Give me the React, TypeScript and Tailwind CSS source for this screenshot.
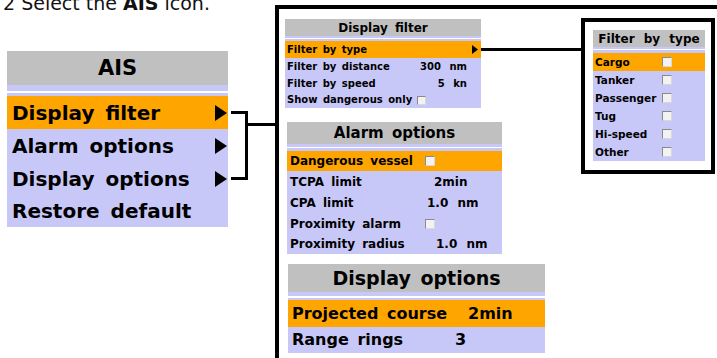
import { FC, ReactNode } from "react";

const ORANGE = "bg-[#ffa500]";
const LAV = "bg-[#c8c8f8]";

const Tri: FC<{ w: number; h: number }> = ({ w, h }) => (
  <svg width={w} height={h} viewBox={`0 0 ${w} ${h}`} className="shrink-0">
    <polygon points={`0,0 ${w},${h / 2} 0,${h}`} fill="#000" />
  </svg>
);

const Box: FC<{ size: number }> = ({ size }) => (
  <span
    className="inline-block shrink-0 border border-[#8a8a8a] border-r-[#d8d8d8] border-b-[#d8d8d8] bg-[#f2f2f2]"
    style={{ width: size, height: size }}
  />
);

// gray header + lavender/white separator strip
const Head: FC<{ title: string; h: string; text: string; strip: [string, string, string] }> = ({
  title,
  h,
  text,
  strip,
}) => (
  <>
    <div className={`flex items-center justify-center bg-[#c0c0c0] ${h} ${text} leading-none [word-spacing:3px]`}>
      {title}
    </div>
    <div className={`${LAV} ${strip[0]}`} />
    <div className={`bg-white ${strip[1]}`} />
    <div className={`${LAV} ${strip[2]}`} />
  </>
);

const Row: FC<{ active?: boolean; h: string; className?: string; children: ReactNode }> = ({
  active,
  h,
  className,
  children,
}) => (
  <div className={`flex items-center leading-none ${h} ${active ? ORANGE : LAV} ${className ?? ""}`}>
    {children}
  </div>
);

const App: FC = () => {
  return (
    <div className="flex items-start w-[717px] h-[358px] overflow-hidden bg-white text-black font-['DejaVu_Sans',sans-serif]">
      {/* left column: instruction + AIS menu */}
      <div className="w-[275px] shrink-0 flex flex-col">
        <p className="-mt-[6px] pl-[3px] text-[19px] leading-[19px] whitespace-nowrap text-[#111]">
          2 Select the <b>AIS</b> icon.
        </p>
        <div className="flex items-start mt-[38px]">
          <div className="ml-[7px] w-[221px] font-bold">
            <Head title="AIS" h="h-[34px]" text="text-[21px]" strip={["h-[6px]", "h-[2px]", "h-[3px]"]} />
            {["Display filter", "Alarm options", "Display options"].map((t, i) => (
              <Row key={t} active={i === 0} h="h-[33px]" className="pl-[5px] pr-[1px] text-[20px] [word-spacing:4px]">
                <span className="flex-1">{t}</span>
                <Tri w={12} h={16} />
              </Row>
            ))}
            <Row h="h-[32px]" className="pl-[5px] text-[20px] [word-spacing:4px]">
              Restore default
            </Row>
          </div>
          <svg width="47" height="180" className="shrink-0">
            <rect x="3" y="60" width="17" height="3" fill="#000" />
            <rect x="17" y="60" width="3" height="69" fill="#000" />
            <rect x="3" y="126" width="17" height="3" fill="#000" />
            <rect x="20" y="72" width="27" height="3" fill="#000" />
          </svg>
        </div>
      </div>

      {/* frame with sub menus */}
      <div className="mt-[5px] h-[353px] flex-1 border-t-[4px] border-l-[4px] border-black pl-[6px] pt-[10px] font-bold">
        <div className="grid grid-cols-[196px_100px_auto] items-start">
          {/* Display filter */}
          <div className="w-[196px]">
            <Head title="Display filter" h="h-[17px]" text="text-[12px]" strip={["h-[2px]", "h-[1px]", "h-[2px]"]} />
            <Row active h="h-[17px]" className="pl-[2px] pr-[3px] text-[10px] [word-spacing:2px]">
              <span className="flex-1">Filter by type</span>
              <Tri w={6} h={9} />
            </Row>
            <Row h="h-[17px]" className="pl-[2px] pr-[14px] text-[10px] [word-spacing:2px]">
              <span className="flex-1">Filter by distance</span>
              <span className="[word-spacing:5px]">300 nm</span>
            </Row>
            <Row h="h-[17px]" className="pl-[2px] pr-[14px] text-[10px] [word-spacing:2px]">
              <span className="flex-1">Filter by speed</span>
              <span className="[word-spacing:5px]">5 kn</span>
            </Row>
            <Row h="h-[16px]" className="pl-[2px] text-[10px] [word-spacing:2px]">
              <span className="mr-[5px]">Show dangerous only</span>
              <Box size={9} />
            </Row>
          </div>

          <div className="mt-[29px] h-[3px] bg-black" />

          {/* Filter by type box */}
          <div className="row-span-2 -mt-[1px] w-[134px] h-[156px] border-[4px] border-black pl-[8px] pt-[8px]">
            <div className="w-[112px]">
              <Head title="Filter by type" h="h-[17px]" text="text-[12px] [word-spacing:5px]" strip={["h-[2px]", "h-[1px]", "h-[3px]"]} />
              {["Cargo", "Tanker", "Passenger", "Tug", "Hi-speed", "Other"].map((t, i) => (
                <Row key={t} active={i === 0} h="h-[18px]" className="pl-[2px] text-[10.5px]">
                  <span className="w-[67px]">{t}</span>
                  <Box size={10} />
                </Row>
              ))}
            </div>
          </div>

          {/* Alarm options */}
          <div className="col-span-2 mt-[14px] ml-[2px] w-[215px]">
            <Head title="Alarm options" h="h-[22px]" text="text-[15px]" strip={["h-[3px]", "h-[1px]", "h-[3px]"]} />
            <Row active h="h-[20px]" className="pl-[3px] text-[12px] [word-spacing:3px]">
              <span className="w-[135px]">Dangerous vessel</span>
              <Box size={10} />
            </Row>
            <Row h="h-[21px]" className="pl-[3px] text-[12px] [word-spacing:3px]">
              <span className="w-[144px]">TCPA limit</span>
              <span>2min</span>
            </Row>
            <Row h="h-[21px]" className="pl-[3px] text-[12px] [word-spacing:3px]">
              <span className="w-[137px]">CPA limit</span>
              <span className="[word-spacing:5px]">1.0 nm</span>
            </Row>
            <Row h="h-[21px]" className="pl-[3px] text-[12px] [word-spacing:3px]">
              <span className="w-[135px]">Proximity alarm</span>
              <Box size={10} />
            </Row>
            <Row h="h-[20px]" className="pl-[3px] text-[12px] [word-spacing:3px]">
              <span className="w-[146px]">Proximity radius</span>
              <span className="[word-spacing:5px]">1.0 nm</span>
            </Row>
          </div>

          {/* Display options */}
          <div className="col-span-3 mt-[10px] ml-[3px] w-[257px]">
            <Head title="Display options" h="h-[28px]" text="text-[19px]" strip={["h-[4px]", "h-[2px]", "h-[2px]"]} />
            <Row active h="h-[27px]" className="pl-[4px] text-[16px] [word-spacing:3px]">
              <span className="w-[176px]">Projected course</span>
              <span>2min</span>
            </Row>
            <Row h="h-[26px]" className="pl-[4px] text-[16px] [word-spacing:3px]">
              <span className="w-[163px]">Range rings</span>
              <span>3</span>
            </Row>
          </div>
        </div>
      </div>
    </div>
  );
};

export default App;
